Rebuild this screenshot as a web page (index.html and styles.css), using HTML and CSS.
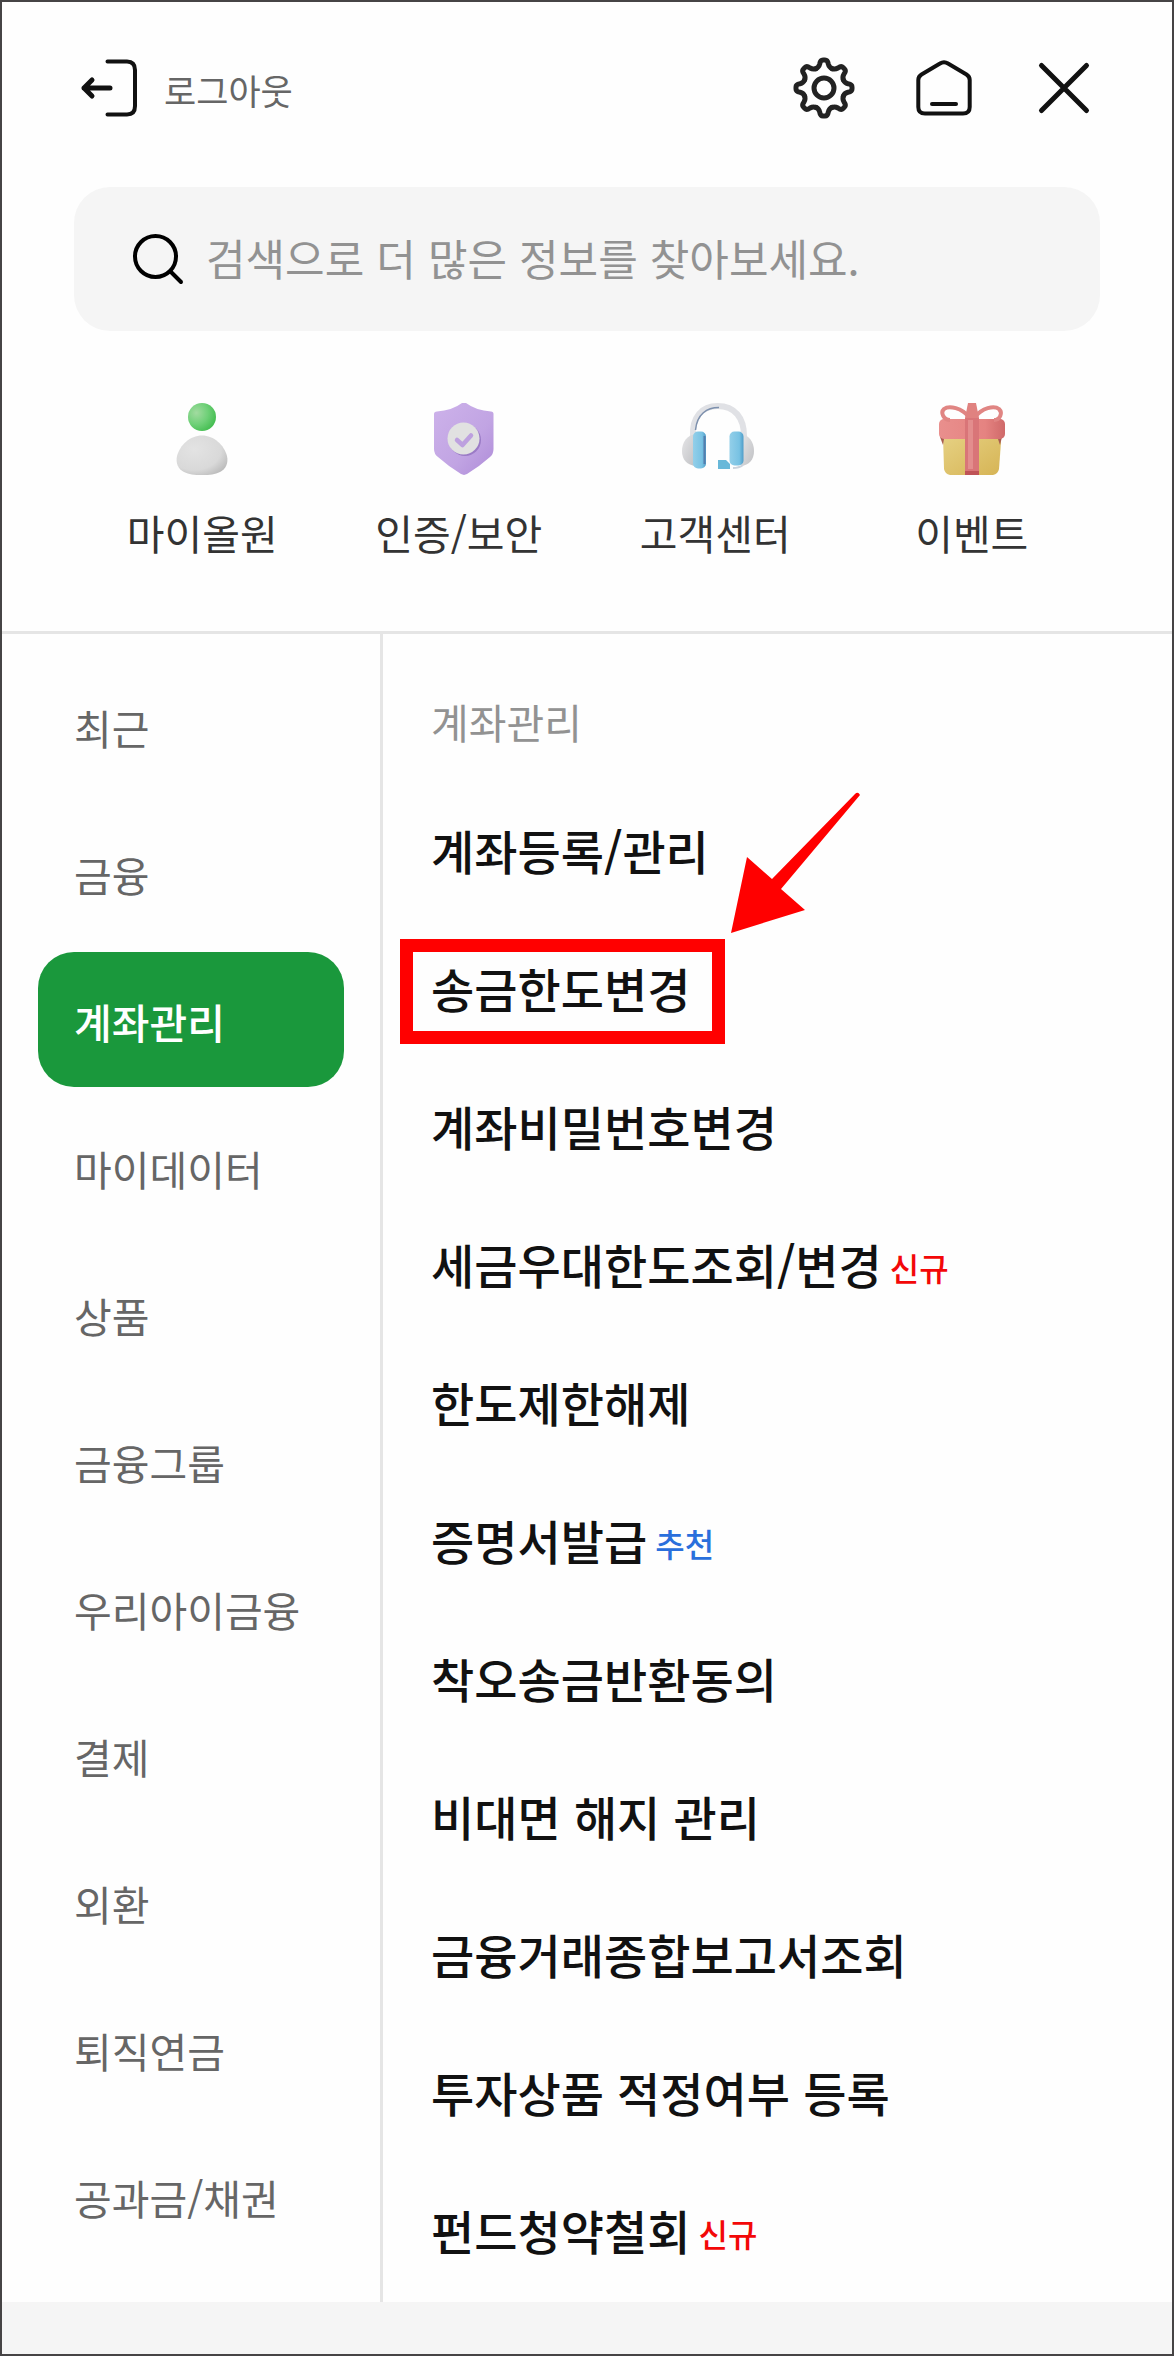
FILE: index.html
```html
<!DOCTYPE html>
<html lang="ko">
<head>
<meta charset="utf-8">
<meta name="viewport" content="width=device-width, initial-scale=1">
<title>전체메뉴</title>
<link rel="stylesheet" href="styles.css">
</head>
<body>
<div class="app">
  <header class="topbar">
    <button class="logout" type="button">
      <svg class="icon" viewBox="0 0 72 72" aria-hidden="true"><path d="M33.500 9.500H53Q61 9.500 61 18V54Q61 62.500 53 62.500H33.500"/><path class="bold" d="M10 36H36M18 28L10 36L18 44"/></svg>
      <span class="logout-label">로그아웃</span>
    </button>
    <div class="actions">
      <button class="icon-button" type="button" aria-label="설정">
        <svg class="icon icon-gear" viewBox="-36 -36 72 72" aria-hidden="true">
          <defs><path id="tooth" d="M-8 -19.400C-5.700 -20.400 -4.800 -22 -4.300 -24C-3.900 -26.500 -3.200 -28 -1 -28H1C3.200 -28 3.900 -26.500 4.300 -24C4.800 -22 5.700 -20.400 8 -19.400"/></defs>
          <use href="#tooth"/><use href="#tooth" transform="rotate(45)"/><use href="#tooth" transform="rotate(90)"/><use href="#tooth" transform="rotate(135)"/><use href="#tooth" transform="rotate(180)"/><use href="#tooth" transform="rotate(225)"/><use href="#tooth" transform="rotate(270)"/><use href="#tooth" transform="rotate(315)"/>
          <circle r="10"/>
        </svg>
      </button>
      <button class="icon-button" type="button" aria-label="홈">
        <svg class="icon" viewBox="-36 -36 72 72" aria-hidden="true"><path d="M-4 -24.500Q0 -27 4 -24.500L22.500 -13.500Q25.700 -11.500 25.700 -8V19Q25.700 25.500 19 25.500H-19Q-25.700 25.500 -25.700 19V-8Q-25.700 -11.500 -22.500 -13.500Z"/><path d="M-12 16H12"/></svg>
      </button>
      <button class="icon-button" type="button" aria-label="닫기">
        <svg class="icon" viewBox="-36 -36 72 72" aria-hidden="true"><path class="bold" d="M-22.500 -22.500L22.500 22.500M22.500 -22.500L-22.500 22.500"/></svg>
      </button>
    </div>
  </header>

  <form class="search" role="search">
    <svg class="icon search-icon" viewBox="0 0 72 72" aria-hidden="true"><circle cx="33.500" cy="33.500" r="20.500"/><path d="M48.500 48.500L59 59"/></svg>
    <input class="search-input" type="search" aria-label="메뉴 검색" placeholder="검색으로 더 많은 정보를 찾아보세요.">
  </form>

  <nav class="quick" aria-label="바로가기">
    <a class="quick-link" href="#my">
      <svg class="picture" viewBox="0 0 72 72" aria-hidden="true">
        <defs>
          <radialGradient id="head" cx=".3" cy=".35" r=".75"><stop offset="0" stop-color="#a2dba0"/><stop offset=".55" stop-color="#6fd078"/><stop offset="1" stop-color="#43bd50"/></radialGradient>
          <radialGradient id="torso" cx=".35" cy=".35" r=".75"><stop offset="0" stop-color="#e3e3e3"/><stop offset=".7" stop-color="#d9d9d9"/><stop offset="1" stop-color="#bdbdbd"/></radialGradient>
        </defs>
        <circle cx="36" cy="14" r="14" fill="url(#head)"/>
        <path d="M36 32.500C48 32.500 58 42 61 53C62.500 60 60 66 54 69C49 71.500 44 72 36 72S23 71.500 18 69C12 66 9.500 60 11 53C14 42 24 32.500 36 32.500Z" fill="url(#torso)"/>
      </svg>
      <span>마이올원</span>
    </a>
    <a class="quick-link" href="#security">
      <svg class="picture" viewBox="0 0 72 72" aria-hidden="true">
        <defs>
          <linearGradient id="shield" x1="0" y1="0" x2="1" y2="1"><stop offset="0" stop-color="#cdb2ea"/><stop offset=".6" stop-color="#c1a4e3"/><stop offset="1" stop-color="#ae8bd8"/></linearGradient>
        </defs>
        <path d="M39 0H43Q53 7.500 68 8.500Q70.500 8.500 70.500 11V46Q70.500 51 67 54Q57 63 44 71L41 72L38 71Q25 63 15 54Q11 51 11 46V11Q11 8.500 14 8.500Q29 7.500 39 0Z" fill="url(#shield)"/>
        <circle cx="42" cy="37" r="16" fill="#9b7bc6"/>
        <circle cx="40.500" cy="35.500" r="16" fill="#e1e1e1"/>
        <path d="M34 37L39.500 42L48 32.500" fill="none" stroke="#bda0df" stroke-width="4.500" stroke-linecap="round" stroke-linejoin="round"/>
      </svg>
      <span>인증/보안</span>
    </a>
    <a class="quick-link" href="#support">
      <svg class="picture" viewBox="-3 0 72 72" aria-hidden="true">
        <defs>
          <linearGradient id="pad" x1="0" y1="0" x2="1" y2="0"><stop offset="0" stop-color="#93cfe9"/><stop offset=".7" stop-color="#78c2e3"/><stop offset="1" stop-color="#4e9cc8"/></linearGradient>
          <linearGradient id="cup" x1="0" y1="0" x2="1" y2="1"><stop offset="0" stop-color="#e6e6e8"/><stop offset="1" stop-color="#bfc0c3"/></linearGradient>
        </defs>
        <path d="M11 33C10 14 20 3 35.500 3C53 3 62 15 62 33" fill="none" stroke="#e0e1e5" stroke-width="6"/>
        <path d="M13.500 27C15 11 25 4.500 37 4.500" fill="none" stroke="#7d90ad" stroke-width="1.500"/>
        <path d="M14 31C5 32 0 39 0 48S5 62 14 63Z" fill="url(#cup)"/>
        <path d="M59 31C67 32 72 39 72 48S67 62 59 63Z" fill="url(#cup)"/>
        <rect x="11" y="28.500" width="13" height="37" rx="5" fill="url(#pad)"/>
        <path d="M22.500 33V61" stroke="#547eae" stroke-width="2"/>
        <rect x="47.500" y="28.500" width="14" height="34" rx="5" fill="url(#pad)"/>
        <path d="M36 57H44L48 61V66H36Z" fill="#68b8d9"/>
        <path d="M51 65Q57 65 61 62" fill="none" stroke="#cbd3dc" stroke-width="2"/>
      </svg>
      <span>고객센터</span>
    </a>
    <a class="quick-link" href="#event">
      <svg class="picture" viewBox="0 0 72 72" aria-hidden="true">
        <defs>
          <linearGradient id="box" x1="0" y1="0" x2="1" y2="1"><stop offset="0" stop-color="#e6d183"/><stop offset="1" stop-color="#d6b455"/></linearGradient>
          <linearGradient id="lid" x1="0" y1="0" x2="1" y2="0"><stop offset="0" stop-color="#e98f8d"/><stop offset=".7" stop-color="#e58381"/><stop offset="1" stop-color="#cf6969"/></linearGradient>
        </defs>
        <path d="M7 33H65V39L63 66Q62 71 57 72H14Q9 71 8 66Z" fill="url(#box)"/>
        <path d="M4 34H66L64 42L62 36H8L7 42Z" fill="#a85d4f"/>
        <rect x="3" y="16" width="66" height="20" rx="5" fill="url(#lid)"/>
        <path d="M33 14C26 5 13 2 8 6C4 10 8 17 14 17M39 14C46 5 58 2 63 6C67 10 64 17 58 17" fill="none" stroke="#e08583" stroke-width="4"/>
        <path d="M32 0H40L43 15L36 19L29 15Z" fill="#e08280"/>
        <path d="M29 15H43V72H29Z" fill="#d97578"/>
        <path d="M32 17H37V66H32Z" fill="#e38d8d"/>
        <path d="M29 68H43V72H29Z" fill="#bf5357"/>
      </svg>
      <span>이벤트</span>
    </a>
  </nav>

  <main class="content">
    <nav class="categories" aria-label="메뉴 분류">
      <a class="category" href="#recent">최근</a>
      <a class="category" href="#finance">금융</a>
      <a class="category category-active" href="#account" aria-current="true">계좌관리</a>
      <a class="category" href="#mydata">마이데이터</a>
      <a class="category" href="#products">상품</a>
      <a class="category" href="#group">금융그룹</a>
      <a class="category" href="#kids">우리아이금융</a>
      <a class="category" href="#payment">결제</a>
      <a class="category" href="#exchange">외환</a>
      <a class="category" href="#pension">퇴직연금</a>
      <a class="category" href="#bills">공과금/채권</a>
    </nav>
    <section class="menu" id="account">
      <h2 class="menu-title">계좌관리</h2>
      <ul class="menu-list">
        <li class="menu-item"><a href="#1">계좌등록/관리</a></li>
        <li class="menu-item"><a class="marked" href="#2">송금한도변경
          <svg class="arrow" viewBox="0 0 130 142" aria-hidden="true"><path d="M0 141L16 65L41 87L124 2Q127 -1 129 3L50 97L74 118Z"/></svg></a></li>
        <li class="menu-item"><a href="#3">계좌비밀번호변경</a></li>
        <li class="menu-item"><a href="#4">세금우대한도조회/변경</a><span class="tag tag-new">신규</span></li>
        <li class="menu-item"><a href="#5">한도제한해제</a></li>
        <li class="menu-item"><a href="#6">증명서발급</a><span class="tag tag-pick">추천</span></li>
        <li class="menu-item"><a href="#7">착오송금반환동의</a></li>
        <li class="menu-item"><a href="#8">비대면 해지 관리</a></li>
        <li class="menu-item"><a href="#9">금융거래종합보고서조회</a></li>
        <li class="menu-item"><a href="#10">투자상품 적정여부 등록</a></li>
        <li class="menu-item"><a href="#11">펀드청약철회</a><span class="tag tag-new">신규</span></li>
      </ul>
    </section>
  </main>
  <footer class="bottom"></footer>
</div>
</body>
</html>
```
FILE: styles.css
```css
* {
  box-sizing: border-box;
}

body {
  margin: 0;
  background: #fefefe;
  color: #111;
  font-family: "Noto Sans CJK KR", sans-serif;
}

a {
  color: inherit;
  text-decoration: none;
}

button {
  padding: 0;
  border: 0;
  background: none;
  color: inherit;
  font: inherit;
}

.app {
  border: 2px solid #464445;
}

.icon {
  display: block;
  flex: none;
  width: 72px;
  height: 72px;
  fill: none;
  stroke: #111;
  stroke-width: 4;
  stroke-linecap: round;
  stroke-linejoin: round;
}

.icon-gear {
  stroke: #222;
  stroke-width: 5;
}

.bold {
  stroke-width: 5;
}

.topbar {
  display: flex;
  justify-content: space-between;
  padding: 50px 72px 0;
}

.logout {
  display: flex;
  align-items: center;
  gap: 18px;
  color: #666;
  font-size: 35px;
  line-height: 60px;
}

.logout-label {
  padding-top: 4px;
}

.actions {
  display: flex;
  gap: 48px;
}

.search {
  display: flex;
  align-items: center;
  gap: 12px;
  height: 144px;
  margin: 63px 72px 0;
  padding: 0 48px;
  border-radius: 36px;
  background: #f5f5f5;
}

.search-icon {
  stroke: #000;
}

.search-input {
  flex: 1;
  min-width: 0;
  padding: 0 0 4px;
  border: 0;
  outline: 0;
  background: none;
  color: #111;
  font: inherit;
  font-size: 43px;
  line-height: 64px;
}

.search-input::placeholder {
  color: #929292;
  opacity: 1;
}

.quick {
  display: grid;
  grid-template-columns: repeat(4, 1fr);
  padding: 72px 72px 69px;
  border-bottom: 3px solid #e5e5e5;
}

.quick-link {
  display: flex;
  flex-direction: column;
  align-items: center;
  gap: 27px;
  color: #333;
  font-size: 41px;
  line-height: 60px;
}

.picture {
  width: 72px;
  height: 72px;
  overflow: visible;
}

.content {
  display: flex;
}

.categories {
  display: flex;
  flex: none;
  flex-direction: column;
  gap: 12px;
  width: 381px;
  padding: 24px 36px 39px;
  border-right: 3px solid #e5e5e5;
}

.category {
  padding: 3px 36px 0;
  border-radius: 36px;
  color: #666;
  font-size: 41px;
  line-height: 132px;
  white-space: nowrap;
}

.category-active {
  background: #1a983c;
  color: #fff;
  font-weight: 500;
}

.menu {
  flex: 1;
  padding: 57px 48px 0;
}

.menu-title {
  margin: 0 0 30px;
  color: #929292;
  font-size: 41px;
  font-weight: 400;
  line-height: 60px;
}

.menu-list {
  margin: 0;
  padding: 0;
  list-style: none;
}

.menu-item {
  display: flex;
  align-items: center;
  gap: 8px;
  height: 138px;
  font-size: 47px;
  font-weight: 500;
  line-height: 72px;
  white-space: nowrap;
}

.marked {
  position: relative;
}

/* Callout frame around the highlighted entry */
.marked::after {
  content: "";
  position: absolute;
  inset: -13px -35px -20px -31px;
  border: 13px solid #f00;
}

.arrow {
  position: absolute;
  left: 100%;
  bottom: 90px;
  width: 130px;
  height: 142px;
  margin-left: 41px;
  fill: #f00;
}

.tag {
  padding-top: 5px;
  font-size: 32px;
  line-height: 48px;
}

.tag-new {
  color: #f30808;
}

.tag-pick {
  color: #2a6fdc;
}

.bottom {
  height: 52px;
  background: #f5f5f5;
}
```
